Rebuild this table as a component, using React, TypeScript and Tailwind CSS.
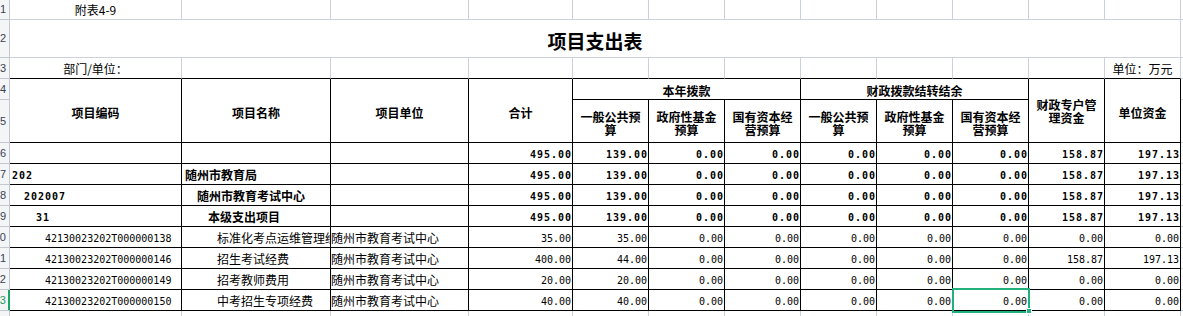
import React from "react";

// light spreadsheet gridline vs. printed table border
const GRID = "border-r border-b border-[#cdd1dd]";
const LINE = "border-r border-b border-black";
const MONO = "font-['DejaVu_Sans_Mono',monospace]";

type Row = {
  n: number;
  code: string;
  name: string;
  unit: string;
  lvl: number;
  bold: boolean;
  vals: string[];
};

const totals = ["495.00", "139.00", "0.00", "0.00", "0.00", "0.00", "0.00", "158.87", "197.13"];

const rows: Row[] = [
  { n: 6, code: "", name: "", unit: "", lvl: 0, bold: true, vals: totals },
  { n: 7, code: "202", name: "随州市教育局", unit: "", lvl: 0, bold: true, vals: totals },
  { n: 8, code: "202007", name: "随州市教育考试中心", unit: "", lvl: 1, bold: true, vals: totals },
  { n: 9, code: "31", name: "本级支出项目", unit: "", lvl: 2, bold: true, vals: totals },
  {
    n: 10,
    code: "42130023202T000000138",
    name: "标准化考点运维管理经费",
    unit: "随州市教育考试中心",
    lvl: 3,
    bold: false,
    vals: ["35.00", "35.00", "0.00", "0.00", "0.00", "0.00", "0.00", "0.00", "0.00"],
  },
  {
    n: 11,
    code: "42130023202T000000146",
    name: "招生考试经费",
    unit: "随州市教育考试中心",
    lvl: 3,
    bold: false,
    vals: ["400.00", "44.00", "0.00", "0.00", "0.00", "0.00", "0.00", "158.87", "197.13"],
  },
  {
    n: 12,
    code: "42130023202T000000149",
    name: "招考教师费用",
    unit: "随州市教育考试中心",
    lvl: 3,
    bold: false,
    vals: ["20.00", "20.00", "0.00", "0.00", "0.00", "0.00", "0.00", "0.00", "0.00"],
  },
  {
    n: 13,
    code: "42130023202T000000150",
    name: "中考招生专项经费",
    unit: "随州市教育考试中心",
    lvl: 3,
    bold: false,
    vals: ["40.00", "40.00", "0.00", "0.00", "0.00", "0.00", "0.00", "0.00", "0.00"],
  },
];

const codePad = ["pl-[2px]", "pl-[14px]", "pl-[26px]", "pl-[35px]"];
const namePad = ["pl-[3px]", "pl-[15px]", "pl-[26px]", "pl-[35px]"];

function RowNo({ n, active }: { n?: number; active?: boolean }) {
  return (
    <div
      className={`flex items-center justify-end overflow-hidden border-r border-b bg-[#f4f5f7] font-['Liberation_Sans',sans-serif] text-[11px] ${
        active
          ? "border-r-[#21a366] border-b-[#c3c7cf] text-[#1e9c62] shadow-[inset_-1px_0_0_#21a366]"
          : "border-[#c3c7cf] text-[#3a4254]"
      }`}
    >
      {n !== undefined && <span className="shrink-0 pr-[3px]">{n}</span>}
    </div>
  );
}

function Head({ lines, className = "" }: { lines: string[]; className?: string }) {
  return (
    <div
      className={`${LINE} flex flex-col items-center justify-center pt-[3px] text-[12px] font-bold leading-[13px] ${className}`}
    >
      {lines.map((l) => (
        <span key={l} className="whitespace-nowrap">
          {l}
        </span>
      ))}
    </div>
  );
}

function Num({ v, bold }: { v: string; bold: boolean }) {
  return (
    <div
      className={`${LINE} ${MONO} flex items-end justify-end overflow-hidden pb-[2px] text-[10px] leading-[12px] ${
        bold ? "font-bold tracking-[1px] pr-0" : "pr-[1px]"
      }`}
    >
      {v}
    </div>
  );
}

export default function App() {
  return (
    <div className="relative h-[316px] w-[1183px] overflow-hidden bg-white font-['Noto_Sans_CJK_SC',sans-serif] text-black">
      <div className="grid grid-cols-[10px_172px_149px_138px_104px_76px_76px_76px_76px_76px_76px_76px_76px_2px] grid-rows-[20px_38px_21px_21px_43px_21px_21px_21px_21px_21px_21px_21px_21px_5px]">
        {/* row 1 */}
        <RowNo n={1} />
        <div className={`${GRID} flex items-end justify-center pb-[2px] text-[12px] leading-[14px]`}>附表4-9</div>
        {Array.from({ length: 11 }).map((_, i) => (
          <div key={`r1-${i}`} className={GRID} />
        ))}
        <div className="border-b border-[#cdd1dd]" />

        {/* row 2: title */}
        <RowNo n={2} />
        <div className={`${GRID} col-span-12 flex items-center justify-center pt-[5px] text-[19px] font-bold leading-[22px]`}>
          项目支出表
        </div>
        <div className="border-b border-[#cdd1dd]" />

        {/* row 3 */}
        <RowNo n={3} />
        <div className="flex items-end justify-center border-r border-b border-r-[#cdd1dd] border-b-black pb-[2px] text-[12px] leading-[14px]">
          部门/单位：
        </div>
        {Array.from({ length: 10 }).map((_, i) => (
          <div key={`r3-${i}`} className="border-r border-b border-r-[#cdd1dd] border-b-black" />
        ))}
        <div className="flex items-end justify-center border-r border-b border-r-[#cdd1dd] border-b-black pb-[2px] text-[12px] leading-[14px]">
          单位：万元
        </div>
        <div className="border-b border-[#cdd1dd]" />

        {/* rows 4-5: header */}
        <RowNo n={4} />
        <Head lines={["项目编码"]} className="row-span-2" />
        <Head lines={["项目名称"]} className="row-span-2" />
        <Head lines={["项目单位"]} className="row-span-2" />
        <Head lines={["合计"]} className="row-span-2" />
        <Head lines={["本年拨款"]} className="col-span-3 !justify-end pb-[2px]" />
        <Head lines={["财政拨款结转结余"]} className="col-span-3 !justify-end pb-[2px]" />
        <Head lines={["财政专户管", "理资金"]} className="row-span-2 !justify-start !pt-[19px]" />
        <Head lines={["单位资金"]} className="row-span-2" />
        <div className="border-b border-[#cdd1dd]" />

        <RowNo n={5} />
        {[0, 1].map((g) =>
          [
            ["一般公共预", "算"],
            ["政府性基金", "预算"],
            ["国有资本经", "营预算"],
          ].map((l) => <Head key={`${g}-${l[0]}`} lines={l} />)
        )}
        <div className="border-b border-[#cdd1dd]" />

        {/* body */}
        {rows.map((r) => (
          <React.Fragment key={r.n}>
            <RowNo n={r.n} active={r.n === 13} />
            <div
              className={`${LINE} ${MONO} ${codePad[r.lvl]} flex items-end overflow-hidden whitespace-nowrap pb-[2px] text-[10px] leading-[12px] ${
                r.bold ? "font-bold tracking-[1px]" : ""
              }`}
            >
              {r.code}
            </div>
            <div
              className={`${LINE} ${namePad[r.lvl]} flex items-end overflow-hidden whitespace-nowrap pb-[2px] text-[12px] leading-[14px] ${
                r.bold ? "font-bold" : ""
              }`}
            >
              {r.name}
            </div>
            <div className={`${LINE} flex items-end overflow-hidden whitespace-nowrap pb-[2px] text-[12px] leading-[14px]`}>
              {r.unit}
            </div>
            {r.vals.map((v, i) => (
              <Num key={i} v={v} bold={r.bold} />
            ))}
            <div className="border-b border-[#cdd1dd]" />
          </React.Fragment>
        ))}

        {/* partial row 14 */}
        <div className="border-r border-[#c3c7cf] bg-[#f4f5f7]" />
        {Array.from({ length: 12 }).map((_, i) => (
          <div key={`r14-${i}`} className="border-r border-[#cdd1dd]" />
        ))}
        <div />
      </div>

      {/* active cell selection */}
      <div className="pointer-events-none absolute left-[952px] top-[288px] h-[25px] w-[78px] border-2 border-[#22b07d]" />
      <div className="pointer-events-none absolute left-[1026px] top-[308px] h-[6px] w-[6px] border border-white bg-[#22b07d]" />
    </div>
  );
}
